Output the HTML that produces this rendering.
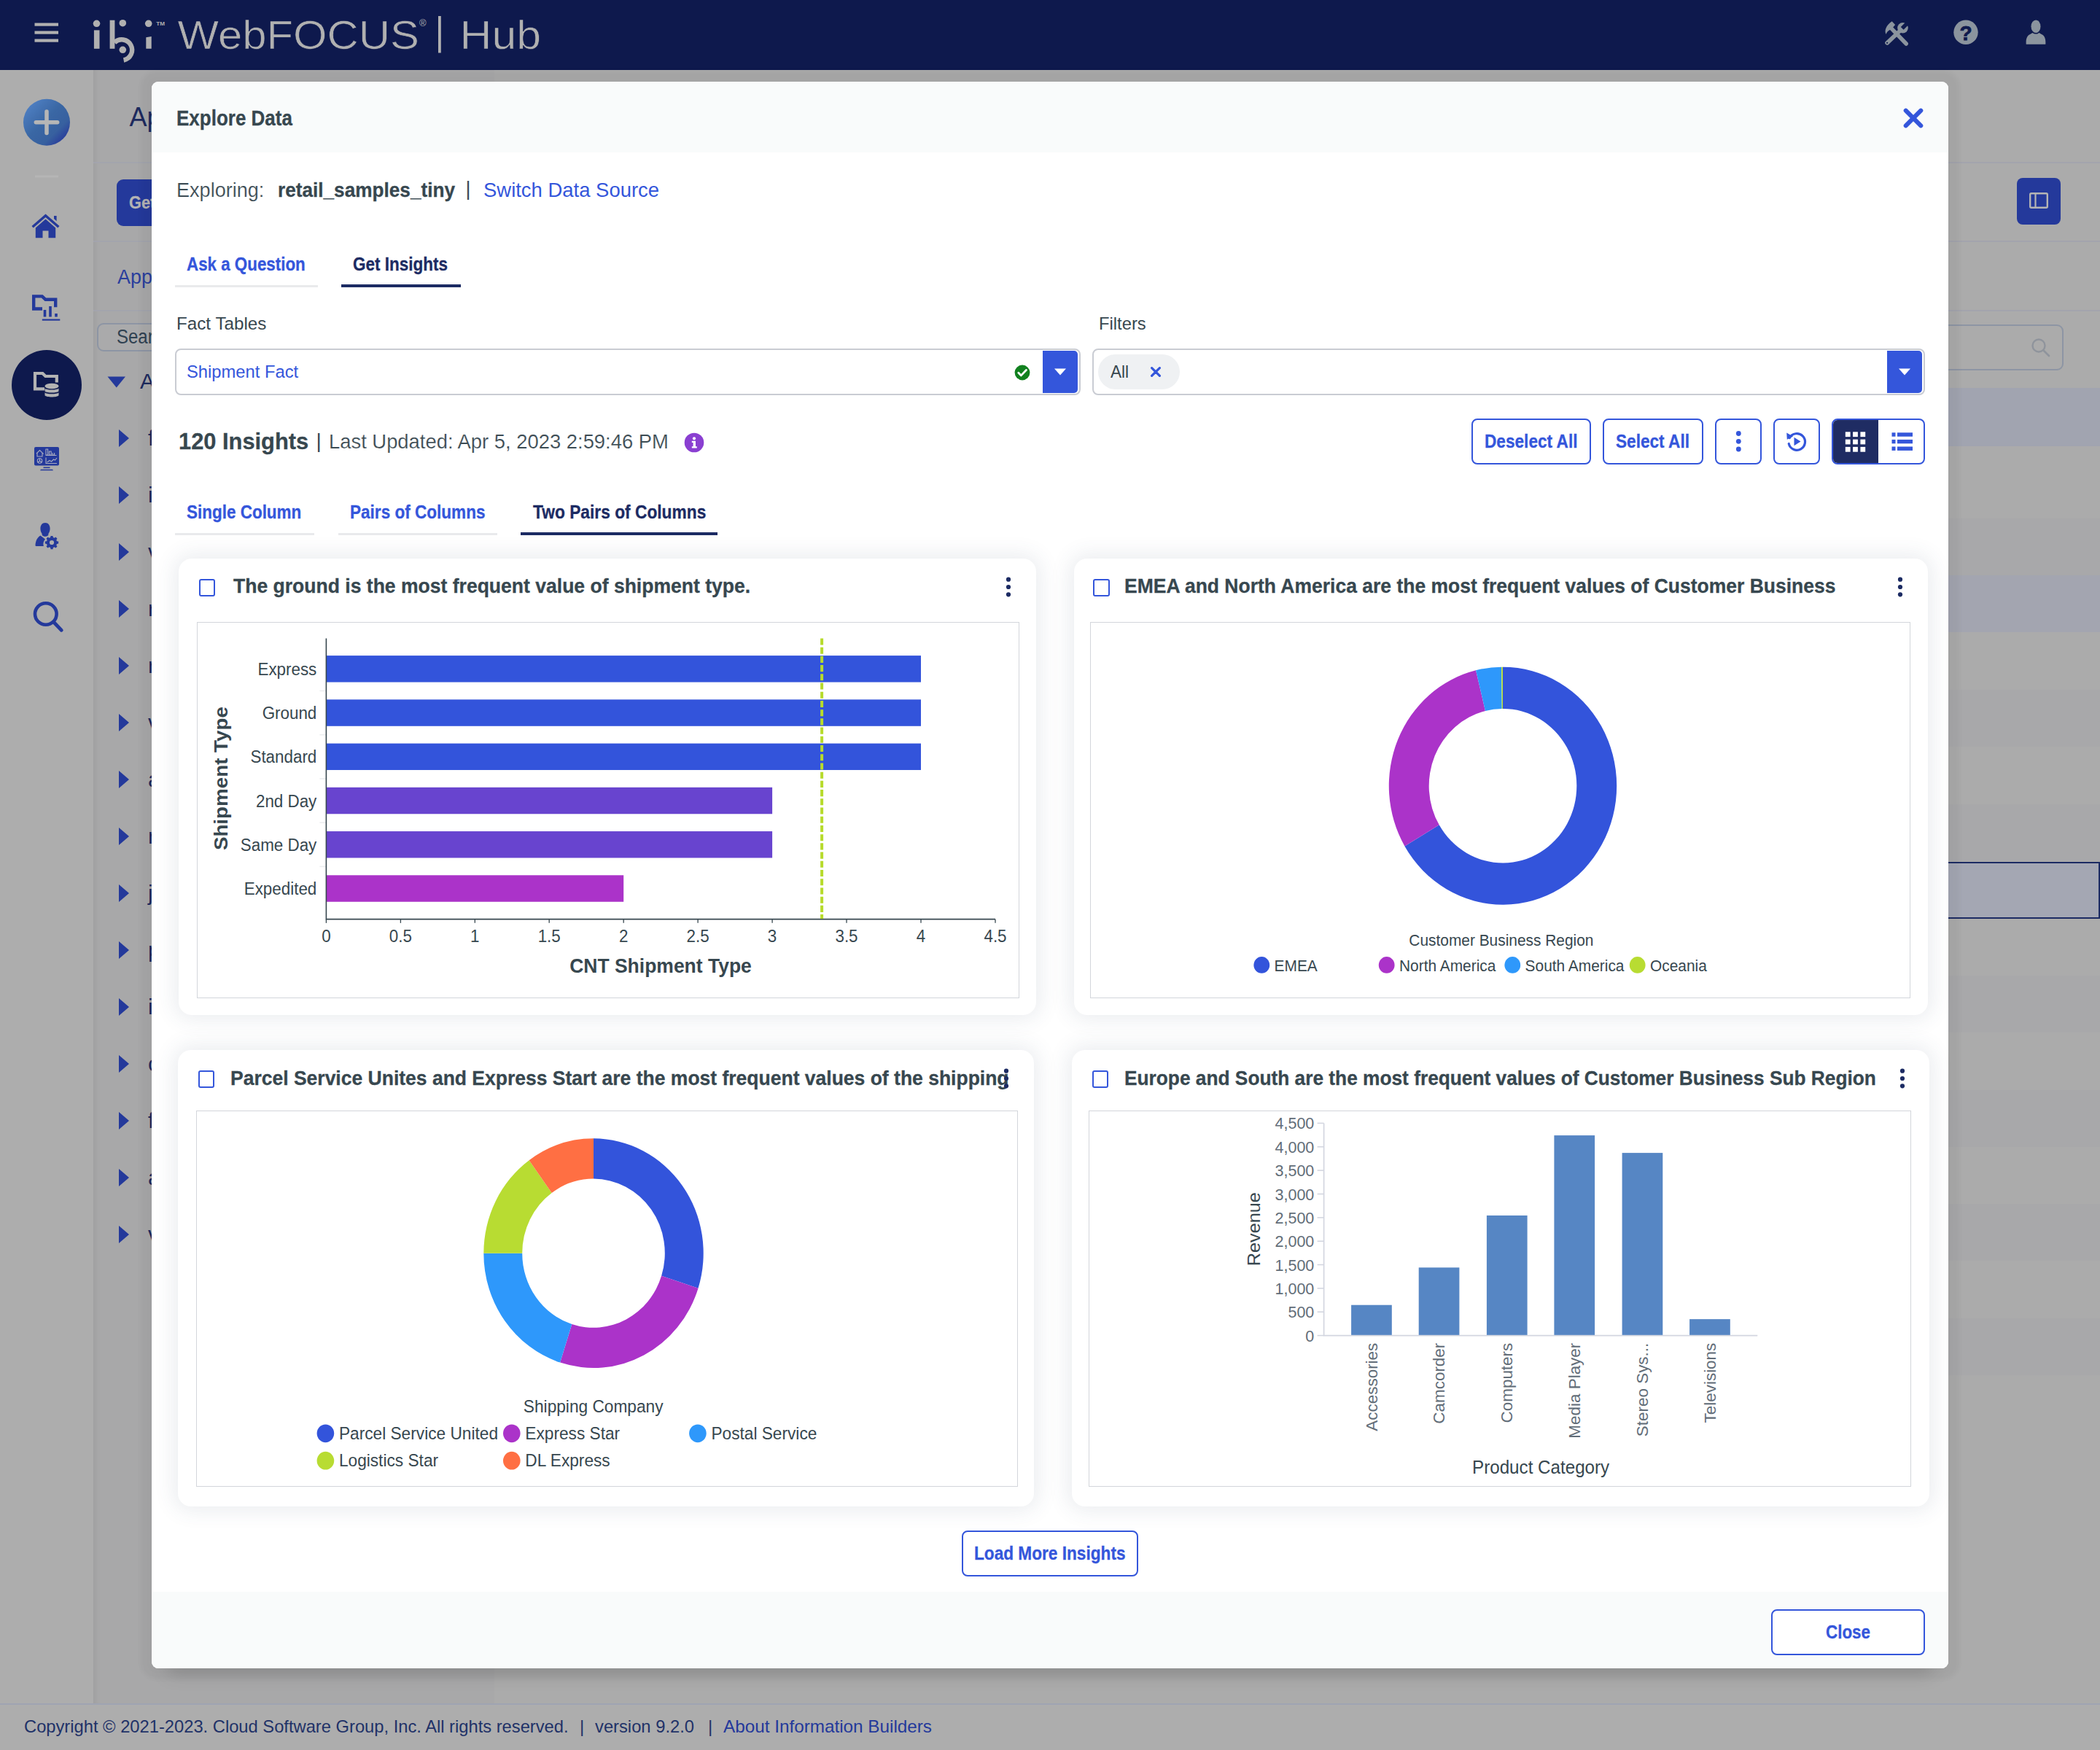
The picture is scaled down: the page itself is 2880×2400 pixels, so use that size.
<!DOCTYPE html>
<html lang="en"><head><meta charset="utf-8"><title>WebFOCUS Hub - Explore Data</title>
<style>
html,body{margin:0;padding:0}
html{overflow:hidden;background:#acacac}
body{width:2880px;height:2400px;position:relative;overflow:hidden;background:#acacac;font-family:"Liberation Sans",Arial,sans-serif;color:#37474f}
.a{position:absolute;box-sizing:border-box}
.t{position:absolute;white-space:nowrap;line-height:1;transform-origin:0 50%;display:block}
svg{position:absolute;overflow:visible}
svg text{font-family:"Liberation Sans",Arial,sans-serif}
.btn{position:absolute;box-sizing:border-box;border:2px solid #3456db;border-radius:8px;background:#fff}
.card{position:absolute;box-sizing:border-box;background:#fff;border-radius:18px;box-shadow:0 0 28px 6px rgba(60,75,110,.10)}
.chart{position:absolute;box-sizing:border-box;border:1.5px solid #d3d6db;background:#fff}
.cb{position:absolute;box-sizing:border-box;width:22.300px;height:23.500px;border:2px solid #3456db;border-radius:3px;background:#fff}
.sel{position:absolute;box-sizing:border-box;border:2px solid #c9ccd3;border-radius:8px;background:#fff}
.dd{position:absolute;background:#3456db}

</style></head>
<body>
<div class="a" style="left:0;top:96px;width:128px;height:2241px;background:#adadad"></div>
<div class="a" style="left:128px;top:96px;width:550px;height:2241px;background:#a8a8a9;box-shadow:inset 8px 0 8px -6px rgba(0,0,0,.07)"></div>
<div class="a" style="left:678px;top:96px;width:2202px;height:2241px;background:#ababab"></div>
<div class="a" style="left:128px;top:222px;width:2752px;height:2px;background:#a3a4ad"></div>
<div class="a" style="left:128px;top:330px;width:2752px;height:2px;background:#a3a4ad"></div>
<div class="a" style="left:128px;top:425px;width:2752px;height:2px;background:#a3a4ad"></div>
<span class="t" style="left:177.5px;top:142.9px;font-size:36px;color:#1d2a5e;">Application Directories</span>
<div class="a" style="left:160px;top:246px;width:120px;height:64px;border-radius:9px;background:#24399b"></div>
<span class="t" style="left:176.5px;top:266.8px;font-size:23px;color:#b4b4b4;font-weight:700;-webkit-text-stroke:.3px;transform:scaleX(0.9442);">Get Insights</span>
<span class="t" style="left:160.5px;top:367.3px;font-size:27px;color:#2a3f9d;transform:scaleX(0.9956);">Application</span>
<div class="a" style="left:132.500px;top:442.500px;width:420px;height:39px;border:2px solid #8d95a4;border-radius:9px;background:#aaaaab"></div>
<span class="t" style="left:160.0px;top:448.8px;font-size:27px;color:#2f4151;transform:scaleX(0.8884);">Search</span>
<svg class="a" style="left:0;top:0" width="230" height="2400"><g fill="#24399b">
<path d="M147.500 516.500h24.500l-12.250 15z"/>
<path d="M163 589l14 12l-14 12z"/>
<path d="M163 667l14 12l-14 12z"/>
<path d="M163 745l14 12l-14 12z"/>
<path d="M163 823l14 12l-14 12z"/>
<path d="M163 901l14 12l-14 12z"/>
<path d="M163 979l14 12l-14 12z"/>
<path d="M163 1057l14 12l-14 12z"/>
<path d="M163 1135l14 12l-14 12z"/>
<path d="M163 1213l14 12l-14 12z"/>
<path d="M163 1291l14 12l-14 12z"/>
<path d="M163 1369l14 12l-14 12z"/>
<path d="M163 1447l14 12l-14 12z"/>
<path d="M163 1525l14 12l-14 12z"/>
<path d="M163 1603l14 12l-14 12z"/>
<path d="M163 1681l14 12l-14 12z"/>
</g></svg>
<span class="t" style="left:192.0px;top:508.3px;font-size:30px;color:#1d2a5e;">Application Directories</span>
<span class="t" style="left:203.0px;top:586.3px;font-size:30px;color:#1d2a5e;">f</span>
<span class="t" style="left:203.0px;top:664.3px;font-size:30px;color:#1d2a5e;">i</span>
<span class="t" style="left:203.0px;top:742.3px;font-size:30px;color:#1d2a5e;">v</span>
<span class="t" style="left:203.0px;top:820.3px;font-size:30px;color:#1d2a5e;">r</span>
<span class="t" style="left:203.0px;top:898.3px;font-size:30px;color:#1d2a5e;">r</span>
<span class="t" style="left:203.0px;top:976.3px;font-size:30px;color:#1d2a5e;">v</span>
<span class="t" style="left:203.0px;top:1054.3px;font-size:30px;color:#1d2a5e;">a</span>
<span class="t" style="left:203.0px;top:1132.3px;font-size:30px;color:#1d2a5e;">r</span>
<span class="t" style="left:203.0px;top:1210.3px;font-size:30px;color:#1d2a5e;">j</span>
<span class="t" style="left:203.0px;top:1288.3px;font-size:30px;color:#1d2a5e;">p</span>
<span class="t" style="left:203.0px;top:1366.3px;font-size:30px;color:#1d2a5e;">i</span>
<span class="t" style="left:203.0px;top:1444.3px;font-size:30px;color:#1d2a5e;">c</span>
<span class="t" style="left:203.0px;top:1522.3px;font-size:30px;color:#1d2a5e;">f</span>
<span class="t" style="left:203.0px;top:1600.3px;font-size:30px;color:#1d2a5e;">a</span>
<span class="t" style="left:203.0px;top:1678.3px;font-size:30px;color:#1d2a5e;">v</span>
<div class="a" style="left:2672px;top:532px;width:208px;height:80px;background:#a1a4b0"></div>
<div class="a" style="left:2672px;top:711px;width:208px;height:78px;background:#a8a8aa"></div>
<div class="a" style="left:2672px;top:946px;width:208px;height:78px;background:#a8a8aa"></div>
<div class="a" style="left:2672px;top:1103px;width:208px;height:78px;background:#a8a8aa"></div>
<div class="a" style="left:2672px;top:1338px;width:208px;height:78px;background:#a8a8aa"></div>
<div class="a" style="left:2672px;top:1495px;width:208px;height:78px;background:#a8a8aa"></div>
<div class="a" style="left:2672px;top:1651px;width:208px;height:78px;background:#a8a8aa"></div>
<div class="a" style="left:2672px;top:1808px;width:208px;height:78px;background:#a8a8aa"></div>
<div class="a" style="left:2672px;top:789px;width:208px;height:78px;background:#a3a5b0"></div>
<div class="a" style="left:2640px;top:1182px;width:239.500px;height:78px;background:#a4a7b3;border:2.500px solid #1c2b63"></div>
<div class="a" style="left:2400px;top:444.500px;width:430px;height:63px;border:2px solid #8d95a4;border-radius:9px"></div>
<svg class="a" style="left:2782px;top:460px" width="34" height="34" viewBox="0 0 34 34"><circle cx="14" cy="14" r="8.5" fill="none" stroke="#8f949c" stroke-width="2.4"/><path d="M20.5 20.5L28 28" stroke="#8f949c" stroke-width="2.6" stroke-linecap="round"/></svg>
<div class="a" style="left:2766px;top:244px;width:60px;height:64px;border-radius:8px;background:#24399b"></div>
<svg class="a" style="left:2783px;top:264px" width="26" height="24" viewBox="0 0 26 24"><rect x="1.2" y="1.2" width="23.6" height="19.6" rx="1.5" fill="none" stroke="#b4b4b4" stroke-width="2.4"/><path d="M8.5 1v20" stroke="#b4b4b4" stroke-width="2.2"/></svg>
<div class="a" style="left:0;top:2336px;width:2880px;height:64px;background:#adadad;border-top:2px solid #9fa4b2"></div>
<span class="t" style="left:32.7px;top:2356.3px;font-size:24px;color:#1f3268;transform:scaleX(0.9883);">Copyright © 2021-2023. Cloud Software Group, Inc. All rights reserved.</span>
<span class="t" style="left:795.0px;top:2356.3px;font-size:24px;color:#1f3268;">|</span>
<span class="t" style="left:816.0px;top:2356.3px;font-size:24px;color:#1f3268;transform:scaleX(0.9897);">version 9.2.0</span>
<span class="t" style="left:971.0px;top:2356.3px;font-size:24px;color:#1f3268;">|</span>
<span class="t" style="left:992.0px;top:2356.3px;font-size:24px;color:#24399b;transform:scaleX(1.0112);">About Information Builders</span>
<svg class="a" style="left:0;top:96px" width="128" height="900" viewBox="0 96 128 900">
<defs><linearGradient id="pg" x1="0.1" y1="0.1" x2="0.9" y2="0.9"><stop offset="0" stop-color="#4f80c4"/><stop offset="0.45" stop-color="#3a67a4"/><stop offset="0.75" stop-color="#37609f"/><stop offset="1" stop-color="#27389b"/></linearGradient></defs>
<circle cx="64" cy="167.7" r="32" fill="url(#pg)"/>
<path d="M64 153v29.4M49.3 167.7h29.4" stroke="#b6b6b6" stroke-width="5.5" stroke-linecap="round"/>
<rect x="48" y="240.5" width="32" height="3" fill="#b5b5b5"/>
<g fill="#24399b">
<path d="M62.5 293.5L81.5 310l-2.2 2.6L62.5 298 45.7 312.6 43.5 310zM74 296h3.6v7.2L74 300z"/>
<path d="M48.8 312.5L62.5 300.6l13.7 11.9v13.8H66.5v-9.8h-8v9.8h-9.7z"/>
</g>
<g fill="none" stroke="#24399b">
<path d="M58 423.5H46.2V406.4h11.6l4.6 4.4h13.8v10.5" stroke-width="4.4"/>
<path d="M61.5 425v9.5M69 420v14.500M77 430v4.500" stroke-width="3.6"/>
<path d="M57.800 438.6h24.500" stroke-width="2.2"/>
</g>
<circle cx="64" cy="528" r="48" fill="#0e194d"/>
<path d="M61 533.300H48V512h10.400l4 4h15.400v8.500" fill="none" stroke="#b3b3b3" stroke-width="4.200"/>
<g fill="#b3b3b3"><ellipse cx="71" cy="529.500" rx="9.500" ry="3.800"/><path d="M61.500 532.500c2 2.700 17 2.700 19 0v4c-2 2.800-17 2.800-19 0zM61.500 538.300c2 2.700 17 2.700 19 0v4c-2 3-17 3-19 0z"/></g>
<g fill="#24399b"><rect x="47" y="613" width="34" height="25.500" rx="2"/><path d="M55 645.300h18l-1-1.500H56z"/><rect x="59.500" y="640.500" width="9" height="1.600"/></g>
<g fill="none" stroke="#a9acc0" stroke-width="1.100"><path d="M50 622l4.500-4.500 4.500 4.500v-0.500M51 621.500v4.500h7v-4.500"/><path d="M63 616v8h2.600v-8zM67.500 619v5h2.600v-5zM72 621v3h2.600v-3M62.500 624.500h15"/><circle cx="54.500" cy="632" r="3.200"/><path d="M54.500 628.800v3.200l2.600 2M54.500 632l-2.600 2"/><path d="M63 627.500v8h15M64.500 634l3.500-2.500 2.500 1.500 3-3 2 1 2.500-3"/></g>
<g fill="#24399b"><path d="M62 717c4.300 0 6.600 3.400 6.600 7.800 0 2.700-.8 5.400-2.300 7.400l0 1.800c-1.300 1.200-2.700 1.800-4.300 1.800s-3-.6-4.300-1.800v-1.800c-1.500-2-2.300-4.700-2.300-7.400 0-4.400 2.300-7.800 6.600-7.800z"/><path d="M55.500 734.500l6.500 5 0 0c-2 2-3 5-2.500 8 .1.600.2 1.100.4 1.600H50c-1 0-1.600-.6-1.500-1.600.4-5.200 2.200-10.400 7-13z"/>
<path transform="translate(71 744) scale(.86) translate(-71.500 -743.800)" d="M69.800 733.200h3.400l.5 2.500 2 .85 2.100-1.400 2.400 2.400-1.400 2.100.85 2 2.500.5v3.400l-2.500.5-.85 2 1.400 2.100-2.400 2.400-2.100-1.400-2 .85-.5 2.500h-3.400l-.5-2.500-2-.85-2.100 1.400-2.400-2.400 1.400-2.100-.85-2-2.500-.5v-3.400l2.500-.5.85-2-1.400-2.100 2.400-2.400 2.100 1.400 2-.85zM71.500 740.200a3.600 3.600 0 1 0 0 7.200 3.600 3.600 0 0 0 0-7.200z" fill-rule="evenodd"/></g>
<circle cx="62.800" cy="842" r="14.800" fill="none" stroke="#24399b" stroke-width="4.600"/><path d="M73.500 853L84.300 864.300" stroke="#24399b" stroke-width="4.800" stroke-linecap="round"/>
</svg>
<div class="a" style="left:0;top:0;width:2880px;height:96px;background:#0e194d"></div>
<svg class="a" style="left:0;top:0" width="2880" height="96" viewBox="0 0 2880 96" role="img" aria-label="ibi WebFOCUS Hub"><title>ibi WebFOCUS Hub</title>
<g fill="#b0b0b0"><rect x="47.500" y="31.500" width="32.500" height="4.200"/><rect x="47.500" y="42.500" width="32.500" height="4.200"/><rect x="47.500" y="53.500" width="32.500" height="4.200"/>
<circle cx="132.500" cy="32.300" r="4.800"/><rect x="128.900" y="41.400" width="7.600" height="25.400"/>
<rect x="150.600" y="27.700" width="6.800" height="39.100"/><circle cx="168.300" cy="31.700" r="4.800"/><circle cx="168.300" cy="68.300" r="4.800"/>
<circle cx="203.700" cy="32.300" r="4.800"/><path d="M200.300 51.200l7.400-1.200v16.800h-7.400z"/>
<rect x="601" y="22" width="3.800" height="50.500"/></g>
<path d="M157 58.400A14.200 14.200 0 1 1 169.600 82.500" fill="none" stroke="#b0b0b0" stroke-width="6.400"/>
<text x="214.200" y="34.600" font-size="7" font-weight="700" fill="#b0b0b0" textLength="11.800" lengthAdjust="spacingAndGlyphs">TM</text>
<text x="243.500" y="67" font-size="55.300" fill="#b0b0b0" stroke="#0e194d" stroke-width="0.700" textLength="331.500" lengthAdjust="spacingAndGlyphs">WebFOCUS</text>
<text x="575" y="36" font-size="13" fill="#b0b0b0">®</text>
<text x="630.500" y="67" font-size="55.300" fill="#b0b0b0" stroke="#0e194d" stroke-width="0.700" textLength="111.500" lengthAdjust="spacingAndGlyphs">Hub</text>
<g fill="#8b949e">
<g transform="translate(2575 20)">
<path d="M18.600 18.700L39.200 40" stroke="#8b949e" stroke-width="5.500" stroke-linecap="round" fill="none"/>
<path d="M19.700 9.300L24.100 14L19.600 19.200L16.400 21.200Q13 22.600 11.600 27C8.800 22 11.800 14.500 19.700 9.300Z"/>
<path d="M13.100 38.800L31.500 21.500" stroke="#8b949e" stroke-width="5.700" stroke-linecap="round" fill="none"/>
<circle cx="34.500" cy="18.300" r="7.300"/>
</g>
<circle cx="2696" cy="44.300" r="16.700"/>
<ellipse cx="2792" cy="36.200" rx="6.500" ry="8.800"/><path d="M2778.700 60.700c-.4-6.500.5-11.500 5.500-13.800l3.300-1.800c2.800 2 6.200 2 9 0l3.300 1.800c5 2.300 5.900 7.300 5.500 13.800z"/>
</g>
<circle cx="2588.100" cy="58.800" r="1.150" fill="#0e194d"/><path d="M2608.700 38.900L2618.500 29.100" stroke="#0e194d" stroke-width="5.400"/>
<text x="2696" y="54.600" font-size="28" font-weight="700" fill="#0e194d" stroke="#0e194d" stroke-width="0.800" text-anchor="middle">?</text>
</svg>
<div class="a" style="left:208px;top:112px;width:2464px;height:2176px;border-radius:9px;background:#fff;box-shadow:0 0 6px 15px rgba(0,0,0,.04),0 28px 24px -22px rgba(0,0,0,.17);overflow:hidden"><div class="a" style="left:0;top:0;width:2464px;height:97px;background:#f9fbfb"></div><div class="a" style="left:0;top:2071px;width:2464px;height:105px;background:#f9fbfb"></div></div>
<span class="t" style="left:241.9px;top:147.0px;font-size:29.5px;color:#37474f;font-weight:700;-webkit-text-stroke:.3px;transform:scaleX(0.8811);">Explore Data</span>
<svg class="a" style="left:2608px;top:146px" width="32" height="32" viewBox="0 0 32 32"><path d="M5.700 5.700l20.600 20.600M26.300 5.700l-20.600 20.600" stroke="#3456db" stroke-width="6" stroke-linecap="round"/></svg>
<span class="t" style="left:241.7px;top:247.0px;font-size:28px;color:#3b4b53;transform:scaleX(0.9669);-webkit-text-stroke:.2px #fff;">Exploring:</span>
<span class="t" style="left:380.8px;top:247.0px;font-size:28px;color:#37474f;font-weight:700;-webkit-text-stroke:.3px;transform:scaleX(0.9348);">retail_samples_tiny</span>
<span class="t" style="left:638.5px;top:245.8px;font-size:27px;color:#37474f;">|</span>
<span class="t" style="left:662.7px;top:247.0px;font-size:28px;color:#3456db;transform:scaleX(0.9804);">Switch Data Source</span>
<span class="t" style="left:256.2px;top:349.5px;font-size:25px;color:#3456db;font-weight:700;-webkit-text-stroke:.3px;transform:scaleX(0.8941);">Ask a Question</span>
<div class="a" style="left:240px;top:390.500px;width:195.600px;height:3.500px;background:#e9eaec"></div>
<span class="t" style="left:484.4px;top:349.5px;font-size:25px;color:#1c2b63;font-weight:700;-webkit-text-stroke:.3px;transform:scaleX(0.8993);">Get Insights</span>
<div class="a" style="left:468px;top:390.200px;width:163.800px;height:4px;background:#1c2b63"></div>
<span class="t" style="left:242.3px;top:431.8px;font-size:24.5px;color:#37474f;transform:scaleX(0.9885);">Fact Tables</span>
<span class="t" style="left:1506.7px;top:431.8px;font-size:24.5px;color:#37474f;transform:scaleX(0.9701);">Filters</span>
<div class="sel" style="left:239.500px;top:478px;width:1242px;height:63.500px"></div>
<span class="t" style="left:256.4px;top:497.7px;font-size:24.5px;color:#3456db;transform:scaleX(0.9693);">Shipment Fact</span>
<svg class="a" style="left:1391px;top:499.500px" width="22" height="22" viewBox="0 0 22 22"><circle cx="11" cy="11" r="10.400" fill="#12811f"/><path d="M5.800 11.300l3.600 3.600 7-7.400" fill="none" stroke="#fff" stroke-width="2.800" stroke-linecap="round" stroke-linejoin="round"/></svg>
<div class="dd" style="left:1429.700px;top:481px;width:48.500px;height:57.500px;border-radius:0 5px 5px 0"></div>
<svg class="a" style="left:1445px;top:503.500px" width="18" height="12" viewBox="0 0 18 12"><path d="M1 1.500h16l-8 9z" fill="#fff"/></svg>
<div class="sel" style="left:1498px;top:478px;width:1141.500px;height:63.500px"></div>
<div class="a" style="left:1506px;top:486px;width:111.500px;height:48px;border-radius:24px;background:#eff1f3"></div>
<span class="t" style="left:1522.7px;top:497.7px;font-size:24.5px;color:#37474f;transform:scaleX(0.9220);">All</span>
<svg class="a" style="left:1577px;top:502px" width="16" height="16" viewBox="0 0 16 16"><path d="M2.600 2.600l10.800 10.800M13.400 2.600L2.600 13.400" stroke="#3456db" stroke-width="3.200" stroke-linecap="round"/></svg>
<div class="dd" style="left:2587.800px;top:481px;width:48.500px;height:57.500px;border-radius:0 5px 5px 0"></div>
<svg class="a" style="left:2603px;top:503.500px" width="18" height="12" viewBox="0 0 18 12"><path d="M1 1.500h16l-8 9z" fill="#fff"/></svg>
<span class="t" style="left:245.4px;top:589.0px;font-size:32px;color:#37474f;font-weight:700;-webkit-text-stroke:.3px;transform:scaleX(0.9635);">120 Insights</span>
<span class="t" style="left:433.5px;top:591.3px;font-size:28px;color:#37474f;">|</span>
<span class="t" style="left:451.2px;top:592.0px;font-size:28px;color:#3b4b53;transform:scaleX(0.9780);-webkit-text-stroke:.2px #fff;">Last Updated: Apr 5, 2023 2:59:46 PM</span>
<svg class="a" style="left:938px;top:592.500px" width="28" height="28" viewBox="0 0 28 28"><circle cx="14" cy="14" r="13.300" fill="#8a3fd1"/><circle cx="14" cy="8.300" r="2.100" fill="#fff"/><path d="M10.800 11.800h5.200v7.400h1.800v2.300h-7v-2.300h1.800v-5.100h-1.800z" fill="#fff"/></svg>
<div class="btn" style="left:2018px;top:573.900px;width:163.500px;height:63.300px"></div>
<span class="t" style="left:2036.0px;top:593.0px;font-size:25px;color:#3456db;font-weight:700;-webkit-text-stroke:.3px;transform:scaleX(0.9055);">Deselect All</span>
<div class="btn" style="left:2198px;top:573.900px;width:138px;height:63.300px"></div>
<span class="t" style="left:2216.0px;top:593.0px;font-size:25px;color:#3456db;font-weight:700;-webkit-text-stroke:.3px;transform:scaleX(0.9049);">Select All</span>
<div class="btn" style="left:2352px;top:573.900px;width:64px;height:63.300px"></div>
<svg class="a" style="left:2352px;top:573.900px" width="64" height="63" viewBox="0 0 64 63"><g fill="#3456db"><circle cx="32.300" cy="20.500" r="3.400"/><circle cx="32.300" cy="31.300" r="3.400"/><circle cx="32.300" cy="42" r="3.400"/></g></svg>
<div class="btn" style="left:2432px;top:573.900px;width:64px;height:63.300px"></div>
<svg class="a" style="left:2432px;top:573.900px" width="64" height="63" viewBox="0 0 64 63"><path d="M22.300 26.500A11.300 11.300 0 1 1 21.200 34.500" fill="none" stroke="#3456db" stroke-width="3.200" stroke-linecap="round"/><path d="M18.200 19.500l.6 9.300 8.300-4.200z" fill="#3456db"/><path d="M28.500 25.800l9 5.700-9 5.700z" fill="#3456db"/></svg>
<div class="btn" style="left:2512px;top:573.900px;width:127.500px;height:63.300px;overflow:hidden"><div class="a" style="left:-2px;top:-2px;width:64px;height:63px;background:#1f2c63"></div></div>
<svg class="a" style="left:2512px;top:573.900px" width="128" height="63" viewBox="0 0 128 63"><g fill="#fff"><rect x="18.8" y="18.3" width="6.800" height="6.800"/><rect x="18.8" y="28.6" width="6.800" height="6.800"/><rect x="18.8" y="38.9" width="6.800" height="6.800"/><rect x="29.1" y="18.3" width="6.800" height="6.800"/><rect x="29.1" y="28.6" width="6.800" height="6.800"/><rect x="29.1" y="38.9" width="6.800" height="6.800"/><rect x="39.4" y="18.3" width="6.800" height="6.800"/><rect x="39.4" y="28.6" width="6.800" height="6.800"/><rect x="39.4" y="38.9" width="6.800" height="6.800"/></g><g fill="#3456db"><rect x="82.500" y="19.3" width="5" height="5.400"/><rect x="90" y="19.3" width="21" height="5.400"/><rect x="82.500" y="28.9" width="5" height="5.400"/><rect x="90" y="28.9" width="21" height="5.400"/><rect x="82.500" y="38.5" width="5" height="5.400"/><rect x="90" y="38.5" width="21" height="5.400"/></g></svg>
<span class="t" style="left:256.2px;top:689.5px;font-size:25px;color:#3456db;font-weight:700;-webkit-text-stroke:.3px;transform:scaleX(0.8989);">Single Column</span>
<div class="a" style="left:240px;top:730.500px;width:191.400px;height:3.500px;background:#e9eaec"></div>
<span class="t" style="left:480.2px;top:689.5px;font-size:25px;color:#3456db;font-weight:700;-webkit-text-stroke:.3px;transform:scaleX(0.9023);">Pairs of Columns</span>
<div class="a" style="left:463.800px;top:730.500px;width:218px;height:3.500px;background:#e9eaec"></div>
<span class="t" style="left:730.5px;top:689.5px;font-size:25px;color:#1c2b63;font-weight:700;-webkit-text-stroke:.3px;transform:scaleX(0.9104);">Two Pairs of Columns</span>
<div class="a" style="left:714px;top:730.200px;width:270px;height:4px;background:#1c2b63"></div>
<div class="btn" style="left:1319px;top:2098.500px;width:242px;height:63.300px"></div>
<span class="t" style="left:1336.0px;top:2117.8px;font-size:25px;color:#3456db;font-weight:700;-webkit-text-stroke:.3px;transform:scaleX(0.9055);">Load More Insights</span>
<div class="btn" style="left:2429px;top:2206.500px;width:211px;height:63.300px"></div>
<span class="t" style="left:2503.5px;top:2225.8px;font-size:25px;color:#3456db;font-weight:700;-webkit-text-stroke:.3px;transform:scaleX(0.8961);">Close</span>
<div class="card" style="left:245px;top:766px;width:1176px;height:625.500px"></div>
<div class="cb" style="left:273px;top:794px"></div>
<span class="t" style="left:320.0px;top:790.4px;font-size:27.5px;color:#37474f;font-weight:700;-webkit-text-stroke:.3px;transform:scaleX(0.9649);">The ground is the most frequent value of shipment type.</span>
<svg class="a" style="left:1378.4px;top:788.6px" width="10" height="32" viewBox="0 0 10 32"><g fill="#1c2b63"><circle cx="5" cy="5.700" r="3.100"/><circle cx="5" cy="16" r="3.100"/><circle cx="5" cy="26.300" r="3.100"/></g></svg>
<div class="chart" style="left:269.500px;top:852.500px;width:1128.500px;height:516px"></div>
<div class="card" style="left:1472.500px;top:766px;width:1171.500px;height:625.500px"></div>
<div class="cb" style="left:1499.400px;top:794px"></div>
<span class="t" style="left:1542.3px;top:790.4px;font-size:27.5px;color:#37474f;font-weight:700;-webkit-text-stroke:.3px;transform:scaleX(0.9633);">EMEA and North America are the most frequent values of Customer Business</span>
<svg class="a" style="left:2601.3px;top:788.6px" width="10" height="32" viewBox="0 0 10 32"><g fill="#1c2b63"><circle cx="5" cy="5.700" r="3.100"/><circle cx="5" cy="16" r="3.100"/><circle cx="5" cy="26.300" r="3.100"/></g></svg>
<div class="chart" style="left:1494.800px;top:852.500px;width:1124.800px;height:516px"></div>
<div class="card" style="left:244px;top:1440px;width:1174.300px;height:625.700px"></div>
<div class="cb" style="left:272px;top:1468px"></div>
<span class="t" style="left:316.0px;top:1464.7px;font-size:27.5px;color:#37474f;font-weight:700;-webkit-text-stroke:.3px;transform:scaleX(0.9635);">Parcel Service Unites and Express Start are the most frequent values of the shipping</span>
<svg class="a" style="left:1375.3px;top:1462.9px" width="10" height="32" viewBox="0 0 10 32"><g fill="#1c2b63"><circle cx="5" cy="5.700" r="3.100"/><circle cx="5" cy="16" r="3.100"/><circle cx="5" cy="26.300" r="3.100"/></g></svg>
<div class="chart" style="left:268.500px;top:1523px;width:1127px;height:516px"></div>
<div class="card" style="left:1470.300px;top:1440px;width:1176px;height:625.700px"></div>
<div class="cb" style="left:1497.700px;top:1468px"></div>
<span class="t" style="left:1542.3px;top:1464.7px;font-size:27.5px;color:#37474f;font-weight:700;-webkit-text-stroke:.3px;transform:scaleX(0.9556);">Europe and South are the most frequent values of Customer Business Sub Region</span>
<svg class="a" style="left:2603.6px;top:1462.9px" width="10" height="32" viewBox="0 0 10 32"><g fill="#1c2b63"><circle cx="5" cy="5.700" r="3.100"/><circle cx="5" cy="16" r="3.100"/><circle cx="5" cy="26.300" r="3.100"/></g></svg>
<div class="chart" style="left:1492.500px;top:1523px;width:1128.700px;height:516px"></div>
<svg class="a" style="left:0;top:0" width="2880" height="2400" viewBox="0 0 2880 2400">
<g transform="translate(0 1110) scale(1 1.044) translate(0 -1110)">
<rect x="447.4" y="908.0" width="815.6" height="34.9" fill="#3354db"/>
<text x="434.3" y="933.6" font-size="22.4" fill="#37474f" text-anchor="end">Express</text>
<path d="M438.4 954.3h9" stroke="#eceef0" stroke-width="1.500"/>
<rect x="447.4" y="965.7" width="815.6" height="34.9" fill="#3354db"/>
<text x="434.3" y="991.3" font-size="22.4" fill="#37474f" text-anchor="end">Ground</text>
<path d="M438.4 1012.0h9" stroke="#eceef0" stroke-width="1.500"/>
<rect x="447.4" y="1023.4" width="815.6" height="34.9" fill="#3354db"/>
<text x="434.3" y="1049.1" font-size="22.4" fill="#37474f" text-anchor="end">Standard</text>
<path d="M438.4 1069.7h9" stroke="#eceef0" stroke-width="1.500"/>
<rect x="447.4" y="1081.1" width="611.7" height="34.9" fill="#6844cf"/>
<text x="434.3" y="1106.8" font-size="22.4" fill="#37474f" text-anchor="end">2nd Day</text>
<path d="M438.4 1127.4h9" stroke="#eceef0" stroke-width="1.500"/>
<rect x="447.4" y="1138.8" width="611.7" height="34.9" fill="#6844cf"/>
<text x="434.3" y="1164.5" font-size="22.4" fill="#37474f" text-anchor="end">Same Day</text>
<path d="M438.4 1185.1h9" stroke="#eceef0" stroke-width="1.500"/>
<rect x="447.4" y="1196.5" width="407.8" height="34.9" fill="#ab33c9"/>
<text x="434.3" y="1222.2" font-size="22.4" fill="#37474f" text-anchor="end">Expedited</text>
<path d="M447.4 885.3V1254.3H1365" fill="none" stroke="#37474f" stroke-width="1.600"/>
<path d="M447.4 1254.3v5" stroke="#37474f" stroke-width="1.300"/>
<text x="447.4" y="1284.7" font-size="22.4" fill="#37474f" text-anchor="middle">0</text>
<path d="M549.4 1254.3v5" stroke="#37474f" stroke-width="1.300"/>
<text x="549.4" y="1284.7" font-size="22.4" fill="#37474f" text-anchor="middle">0.5</text>
<path d="M651.3 1254.3v5" stroke="#37474f" stroke-width="1.300"/>
<text x="651.3" y="1284.7" font-size="22.4" fill="#37474f" text-anchor="middle">1</text>
<path d="M753.2 1254.3v5" stroke="#37474f" stroke-width="1.300"/>
<text x="753.2" y="1284.7" font-size="22.4" fill="#37474f" text-anchor="middle">1.5</text>
<path d="M855.2 1254.3v5" stroke="#37474f" stroke-width="1.300"/>
<text x="855.2" y="1284.7" font-size="22.4" fill="#37474f" text-anchor="middle">2</text>
<path d="M957.1 1254.3v5" stroke="#37474f" stroke-width="1.300"/>
<text x="957.1" y="1284.7" font-size="22.4" fill="#37474f" text-anchor="middle">2.5</text>
<path d="M1059.1 1254.3v5" stroke="#37474f" stroke-width="1.300"/>
<text x="1059.1" y="1284.7" font-size="22.4" fill="#37474f" text-anchor="middle">3</text>
<path d="M1161.0 1254.3v5" stroke="#37474f" stroke-width="1.300"/>
<text x="1161.0" y="1284.7" font-size="22.4" fill="#37474f" text-anchor="middle">3.5</text>
<path d="M1263.0 1254.3v5" stroke="#37474f" stroke-width="1.300"/>
<text x="1263.0" y="1284.7" font-size="22.4" fill="#37474f" text-anchor="middle">4</text>
<path d="M1365.0 1254.3v5" stroke="#37474f" stroke-width="1.300"/>
<text x="1365.0" y="1284.7" font-size="22.4" fill="#37474f" text-anchor="middle">4.5</text>
<path d="M1127.1 885.3V1253.7" stroke="#b7db2c" stroke-width="4" stroke-dasharray="8.700 3"/>
<text x="906.0" y="1324.6" font-size="26.5" fill="#37474f" text-anchor="middle" font-weight="700">CNT Shipment Type</text>
<text x="311.9" y="1069.4" font-size="26.6" fill="#37474f" text-anchor="middle" font-weight="700" transform="rotate(-90 311.9 1069.4)">Shipment Type</text>
</g>
<g transform="translate(0 1077.7) scale(1 1.044) translate(0 -1077.7)">
<path fill="#3354db" d="M2061.00 921.50A156.2 156.2 0 1 1 1926.41 1156.98L1973.72 1129.11A101.3 101.3 0 1 0 2061.00 976.40Z"/>
<path fill="#ab33c9" d="M1926.41 1156.98A156.2 156.2 0 0 1 2024.01 925.94L2037.01 979.28A101.3 101.3 0 0 0 1973.72 1129.11Z"/>
<path fill="#2e98fb" d="M2024.01 925.94A156.2 156.2 0 0 1 2059.09 921.51L2059.76 976.41A101.3 101.3 0 0 0 2037.01 979.28Z"/>
<path fill="#b8dc32" d="M2059.09 921.51A156.2 156.2 0 0 1 2061.00 921.50L2061.00 976.40A101.3 101.3 0 0 0 2059.76 976.41Z"/>
<text x="2058.9" y="1287.7" font-size="20.9" fill="#37474f" text-anchor="middle">Customer Business Region</text>
<circle cx="1730.3" cy="1313.1" r="10.900" fill="#3354db"/>
<text x="1747.6" y="1320.9" font-size="20.9" fill="#37474f">EMEA</text>
<circle cx="1901.7" cy="1313.1" r="10.900" fill="#ab33c9"/>
<text x="1919.0" y="1320.9" font-size="20.9" fill="#37474f">North America</text>
<circle cx="2074.3" cy="1313.1" r="10.900" fill="#2e98fb"/>
<text x="2091.6" y="1320.9" font-size="20.9" fill="#37474f">South America</text>
<circle cx="2245.7" cy="1313.1" r="10.900" fill="#b8dc32"/>
<text x="2263.0" y="1320.9" font-size="20.9" fill="#37474f">Oceania</text>
</g>
<g transform="translate(0 1718.7) scale(1 1.044) translate(0 -1718.7)">
<path fill="#3354db" d="M814.00 1568.00A150.7 150.7 0 0 1 957.53 1764.64L907.14 1748.52A97.8 97.8 0 0 0 814.00 1620.90Z"/>
<path fill="#ab33c9" d="M957.53 1764.64A150.7 150.7 0 0 1 768.18 1862.27L784.27 1811.87A97.8 97.8 0 0 0 907.14 1748.52Z"/>
<path fill="#2e98fb" d="M768.18 1862.27A150.7 150.7 0 0 1 663.30 1718.70L716.20 1718.70A97.8 97.8 0 0 0 784.27 1811.87Z"/>
<path fill="#b8dc32" d="M663.30 1718.70A150.7 150.7 0 0 1 725.63 1596.63L756.65 1639.48A97.8 97.8 0 0 0 716.20 1718.70Z"/>
<path fill="#ff6f43" d="M725.63 1596.63A150.7 150.7 0 0 1 814.00 1568.00L814.00 1620.90A97.8 97.8 0 0 0 756.65 1639.48Z"/>
<text x="813.7" y="1927.8" font-size="22.7" fill="#37474f" text-anchor="middle">Shipping Company</text>
<circle cx="446.4" cy="1955.4" r="11.800" fill="#3354db"/>
<text x="464.9" y="1963.0" font-size="22.7" fill="#37474f">Parcel Service United</text>
<circle cx="701.8" cy="1955.4" r="11.800" fill="#ab33c9"/>
<text x="720.3" y="1963.0" font-size="22.7" fill="#37474f">Express Star</text>
<circle cx="956.9" cy="1955.4" r="11.800" fill="#2e98fb"/>
<text x="975.4" y="1963.0" font-size="22.7" fill="#37474f">Postal Service</text>
<circle cx="446.4" cy="1991.2" r="11.800" fill="#b8dc32"/>
<text x="464.9" y="1998.8" font-size="22.7" fill="#37474f">Logistics Star</text>
<circle cx="701.8" cy="1991.2" r="11.800" fill="#ff6f43"/>
<text x="720.3" y="1998.8" font-size="22.7" fill="#37474f">DL Express</text>
</g>
<g transform="translate(0 1780) scale(1 1.044) translate(0 -1780)">
<path d="M1815.6 1550.5V1829.4H2410.300" fill="none" stroke="#d3d6e0" stroke-width="1.700"/>
<path d="M1806.6 1829.4h9" stroke="#d3d6e0" stroke-width="1.500"/>
<text x="1802.3" y="1837.1" font-size="21.5" fill="#626d78" text-anchor="end">0</text>
<path d="M1806.6 1798.4h9" stroke="#d3d6e0" stroke-width="1.500"/>
<text x="1802.3" y="1806.1" font-size="21.5" fill="#626d78" text-anchor="end">500</text>
<path d="M1806.6 1767.4h9" stroke="#d3d6e0" stroke-width="1.500"/>
<text x="1802.3" y="1775.1" font-size="21.5" fill="#626d78" text-anchor="end">1,000</text>
<path d="M1806.6 1736.4h9" stroke="#d3d6e0" stroke-width="1.500"/>
<text x="1802.3" y="1744.1" font-size="21.5" fill="#626d78" text-anchor="end">1,500</text>
<path d="M1806.6 1705.5h9" stroke="#d3d6e0" stroke-width="1.500"/>
<text x="1802.3" y="1713.2" font-size="21.5" fill="#626d78" text-anchor="end">2,000</text>
<path d="M1806.6 1674.5h9" stroke="#d3d6e0" stroke-width="1.500"/>
<text x="1802.3" y="1682.2" font-size="21.5" fill="#626d78" text-anchor="end">2,500</text>
<path d="M1806.6 1643.5h9" stroke="#d3d6e0" stroke-width="1.500"/>
<text x="1802.3" y="1651.2" font-size="21.5" fill="#626d78" text-anchor="end">3,000</text>
<path d="M1806.6 1612.5h9" stroke="#d3d6e0" stroke-width="1.500"/>
<text x="1802.3" y="1620.2" font-size="21.5" fill="#626d78" text-anchor="end">3,500</text>
<path d="M1806.6 1581.5h9" stroke="#d3d6e0" stroke-width="1.500"/>
<text x="1802.3" y="1589.2" font-size="21.5" fill="#626d78" text-anchor="end">4,000</text>
<path d="M1806.6 1550.5h9" stroke="#d3d6e0" stroke-width="1.500"/>
<text x="1802.3" y="1558.2" font-size="21.5" fill="#626d78" text-anchor="end">4,500</text>
<rect x="1853.1" y="1789.3" width="55.700" height="39.4" fill="#5686c4"/>
<text x="1888.6" y="1839.1" font-size="21.5" fill="#626d78" text-anchor="end" transform="rotate(-90 1888.6 1839.1)">Accessories</text>
<rect x="1945.7" y="1740.1" width="55.700" height="88.6" fill="#5686c4"/>
<text x="1981.2" y="1839.1" font-size="21.5" fill="#626d78" text-anchor="end" transform="rotate(-90 1981.2 1839.1)">Camcorder</text>
<rect x="2038.9" y="1671.7" width="55.700" height="157.0" fill="#5686c4"/>
<text x="2074.4" y="1839.1" font-size="21.5" fill="#626d78" text-anchor="end" transform="rotate(-90 2074.4 1839.1)">Computers</text>
<rect x="2131.4" y="1566.5" width="55.700" height="262.2" fill="#5686c4"/>
<text x="2166.9" y="1839.1" font-size="21.5" fill="#626d78" text-anchor="end" transform="rotate(-90 2166.9 1839.1)">Media Player</text>
<rect x="2224.6" y="1589.5" width="55.700" height="239.2" fill="#5686c4"/>
<text x="2260.1" y="1839.1" font-size="21.5" fill="#626d78" text-anchor="end" transform="rotate(-90 2260.1 1839.1)">Stereo Sys...</text>
<rect x="2317.1" y="1807.9" width="55.700" height="20.8" fill="#5686c4"/>
<text x="2352.6" y="1839.1" font-size="21.5" fill="#626d78" text-anchor="end" transform="rotate(-90 2352.6 1839.1)">Televisions</text>
<text x="1727.9" y="1689.7" font-size="24.2" fill="#37474f" text-anchor="middle" transform="rotate(-90 1727.9 1689.7)">Revenue</text>
<text x="2113.1" y="2010.5" font-size="24.2" fill="#37474f" text-anchor="middle">Product Category</text>
</g>
</svg>
</body></html>
